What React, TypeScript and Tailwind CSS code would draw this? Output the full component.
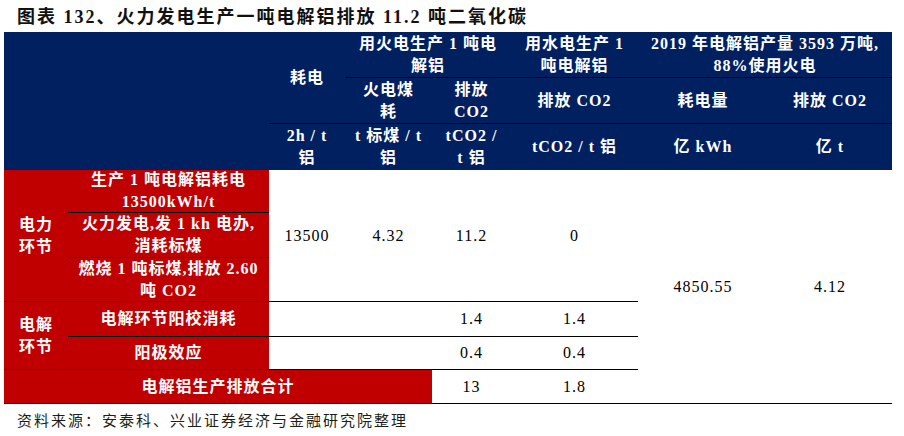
import React from "react";

const serif = "font-['Liberation_Serif','Noto_Sans_CJK_SC',serif]";

function Cell({
  className = "",
  children,
}: {
  className?: string;
  children?: React.ReactNode;
}) {
  return (
    <div
      className={`flex flex-col items-center justify-center text-center leading-[22px] ${className}`}
    >
      {children}
    </div>
  );
}

export default function App() {
  const head = "bg-[#002060] text-white font-bold tracking-[1px]";
  const red = "bg-[#c00000] text-white font-bold tracking-[1px]";
  const num = "bg-white text-black tracking-[1px]";
  const line = "border-b border-black";

  return (
    <div className={`w-[904px] h-[436px] bg-white ${serif} text-[16px]`}>
      <div className="h-[32px] pl-[17px] pt-[6px] text-[18px] font-bold tracking-[2px] text-[#111] leading-[22px]">
        图表 132、火力发电生产一吨电解铝排放 11.2 吨二氧化碳
      </div>

      <div className="ml-[4px] grid grid-cols-[64px_201px_76px_87px_79px_127px_130px_124px] grid-rows-[46px_46px_46px_43px_45px_44px_35px_33px_34px]">
        {/* header */}
        <Cell className={`${head} col-start-1 col-span-2 row-start-1 row-span-3`} />
        <Cell className={`${head} col-start-3 row-start-1 row-span-2 ${line}`}>耗电</Cell>
        <Cell className={`${head} col-start-4 col-span-2 row-start-1 ${line}`}>
          <span>用火电生产 1 吨电</span>
          <span>解铝</span>
        </Cell>
        <Cell className={`${head} col-start-6 row-start-1 ${line}`}>
          <span>用水电生产 1</span>
          <span>吨电解铝</span>
        </Cell>
        <Cell className={`${head} col-start-7 col-span-2 row-start-1 ${line}`}>
          <span>2019 年电解铝产量 3593 万吨,</span>
          <span>88%使用火电</span>
        </Cell>

        <Cell className={`${head} col-start-4 row-start-2 ${line}`}>
          <span>火电煤</span>
          <span>耗</span>
        </Cell>
        <Cell className={`${head} col-start-5 row-start-2 ${line}`}>
          <span>排放</span>
          <span>CO2</span>
        </Cell>
        <Cell className={`${head} col-start-6 row-start-2 ${line}`}>排放 CO2</Cell>
        <Cell className={`${head} col-start-7 row-start-2 ${line}`}>耗电量</Cell>
        <Cell className={`${head} col-start-8 row-start-2 ${line}`}>排放 CO2</Cell>

        <Cell className={`${head} col-start-3 row-start-3`}>
          <span>2h / t</span>
          <span>铝</span>
        </Cell>
        <Cell className={`${head} col-start-4 row-start-3`}>
          <span>t 标煤 / t</span>
          <span>铝</span>
        </Cell>
        <Cell className={`${head} col-start-5 row-start-3`}>
          <span>tCO2 /</span>
          <span>t 铝</span>
        </Cell>
        <Cell className={`${head} col-start-6 row-start-3`}>tCO2 / t 铝</Cell>
        <Cell className={`${head} col-start-7 row-start-3`}>亿 kWh</Cell>
        <Cell className={`${head} col-start-8 row-start-3`}>亿 t</Cell>

        {/* 电力环节 */}
        <Cell className={`${red} col-start-1 row-start-4 row-span-3 ${line}`}>
          <span>电力</span>
          <span>环节</span>
        </Cell>
        <Cell className={`${red} col-start-2 row-start-4 ${line}`}>
          <span>生产 1 吨电解铝耗电</span>
          <span>13500kWh/t</span>
        </Cell>
        <Cell className={`${red} col-start-2 row-start-5 ${line}`}>
          <span>火力发电,发 1 kh 电办,</span>
          <span>消耗标煤</span>
        </Cell>
        <Cell className={`${red} col-start-2 row-start-6 ${line}`}>
          <span>燃烧 1 吨标煤,排放 2.60</span>
          <span>吨 CO2</span>
        </Cell>
        <Cell className={`${num} col-start-3 row-start-4 row-span-3 ${line}`}>13500</Cell>
        <Cell className={`${num} col-start-4 row-start-4 row-span-3 ${line}`}>4.32</Cell>
        <Cell className={`${num} col-start-5 row-start-4 row-span-3 ${line}`}>11.2</Cell>
        <Cell className={`${num} col-start-6 row-start-4 row-span-3 ${line}`}>0</Cell>
        <Cell className={`${num} col-start-7 row-start-4 row-span-6 ${line}`}>4850.55</Cell>
        <Cell className={`${num} col-start-8 row-start-4 row-span-6 ${line}`}>4.12</Cell>

        {/* 电解环节 */}
        <Cell className={`${red} col-start-1 row-start-7 row-span-2 ${line}`}>
          <span>电解</span>
          <span>环节</span>
        </Cell>
        <Cell className={`${red} col-start-2 row-start-7 ${line}`}>电解环节阳校消耗</Cell>
        <Cell className={`${num} col-start-3 row-start-7 ${line}`} />
        <Cell className={`${num} col-start-4 row-start-7 ${line}`} />
        <Cell className={`${num} col-start-5 row-start-7 ${line}`}>1.4</Cell>
        <Cell className={`${num} col-start-6 row-start-7 ${line}`}>1.4</Cell>

        <Cell className={`${red} col-start-2 row-start-8 ${line}`}>阳极效应</Cell>
        <Cell className={`${num} col-start-3 row-start-8 ${line}`} />
        <Cell className={`${num} col-start-4 row-start-8 ${line}`} />
        <Cell className={`${num} col-start-5 row-start-8 ${line}`}>0.4</Cell>
        <Cell className={`${num} col-start-6 row-start-8 ${line}`}>0.4</Cell>

        <Cell className={`${red} col-start-1 col-span-4 row-start-9 ${line}`}>电解铝生产排放合计</Cell>
        <Cell className={`${num} col-start-5 row-start-9 ${line}`}>13</Cell>
        <Cell className={`${num} col-start-6 row-start-9 ${line}`}>1.8</Cell>
      </div>

      <div className="pl-[17px] pt-[7px] text-[15px] tracking-[2px] text-[#1c1f17] leading-[20px]">
        资料来源：安泰科、兴业证券经济与金融研究院整理
      </div>
    </div>
  );
}
